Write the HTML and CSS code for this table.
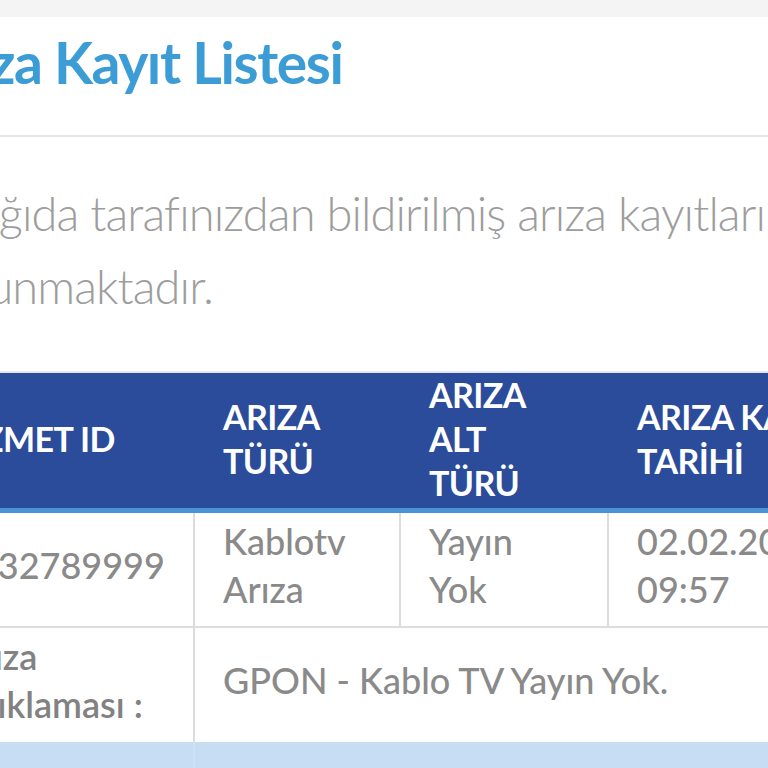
FILE: index.html
```html
<!DOCTYPE html>
<html lang="tr">
<head>
<meta charset="utf-8">
<title>Arıza Kayıt Listesi</title>
<link rel="stylesheet" href="styles.css">
</head>
<body>
<div class="topbar"></div>
<main class="page">
  <header class="page-head">
    <h1 class="title">Arıza Kayıt Listesi</h1>
  </header>
  <p class="intro">Aşağıda tarafınızdan bildirilmiş arıza kayıtları bulunmaktadır.</p>
  <table class="faults">
    <colgroup>
      <col class="col-id">
      <col class="col-type">
      <col class="col-sub">
      <col class="col-date">
      <col class="col-rest">
    </colgroup>
    <thead>
      <tr>
        <th class="first">HİZMET ID</th>
        <th>ARIZA TÜRÜ</th>
        <th>ARIZA ALT TÜRÜ</th>
        <th>ARIZA KAYIT TARİHİ</th>
        <th>DURUM</th>
      </tr>
    </thead>
    <tbody>
      <tr>
        <td>8232789999</td>
        <td>Kablotv Arıza</td>
        <td class="sub">Yayın Yok</td>
        <td>02.02.2018 09:57</td>
        <td>Açık</td>
      </tr>
      <tr class="desc-row">
        <td class="label">Arıza Açıklaması :</td>
        <td colspan="4">GPON - Kablo TV Yayın Yok.</td>
      </tr>
      <tr class="next-row">
        <td></td><td colspan="4"></td>
      </tr>
    </tbody>
  </table>
</main>
</body>
</html>
```

FILE: styles.css
```css
html, body {
  margin: 0;
  padding: 0;
}

body {
  width: 768px;
  height: 768px;
  overflow: hidden;
  background: #ffffff;
  font-family: Lato, "Liberation Sans", sans-serif;
}

.topbar {
  height: 17px;
  background: #f4f4f4;
}

.page {
  margin-left: -72px;
  width: 1100px;
}

.page-head {
  padding: 10px 0 38px;
  border-bottom: 2px solid #e6e6e6;
}

.title {
  margin: 0;
  text-indent: -10px;
  font-size: 57px;
  line-height: 70px;
  font-weight: 700;
  letter-spacing: -1.4px;
  color: #3c9cd5;
}

.intro {
  margin: 0 0 48px;
  padding-top: 40px;
  width: 900px;
  font-size: 47px;
  line-height: 73px;
  font-weight: 300;
  letter-spacing: -0.9px;
  color: #9d9d9d;
}

.faults {
  width: 1100px;
  table-layout: fixed;
  border-collapse: separate;
  border-spacing: 0;
  border-top: 2px solid #e3e6f0;
}

.col-id { width: 267px; }
.col-type { width: 206px; }
.col-sub { width: 208px; }
.col-date { width: 280px; }

.faults th {
  background: #2b4b9b;
  color: #ffffff;
  font-size: 34px;
  line-height: 44px;
  font-weight: 700;
  letter-spacing: -0.6px;
  text-align: left;
  vertical-align: middle;
  padding: 0 30px 3px 28px;
  border-bottom: 5px solid #4b93d2;
}

.faults th.first {
  padding-left: 20px;
}

.faults td {
  font-size: 36px;
  line-height: 48px;
  font-weight: 500;
  color: #8a8a8a;
  vertical-align: middle;
  padding: 4px 30px 13px 28px;
  border-right: 2px solid #dcdcdc;
  border-bottom: 2px solid #dcdcdc;
}

.faults td.sub {
  padding-right: 44px;
}

.faults td.label {
  font-weight: 600;
  color: #828282;
}

.desc-row td {
  padding-bottom: 14px;
  border-bottom: none;
}

.next-row td {
  height: 40px;
  padding: 0;
  background: #c6ddf3;
  border-bottom: none;
  border-right: 2px solid #cfe2f5;
}
```
